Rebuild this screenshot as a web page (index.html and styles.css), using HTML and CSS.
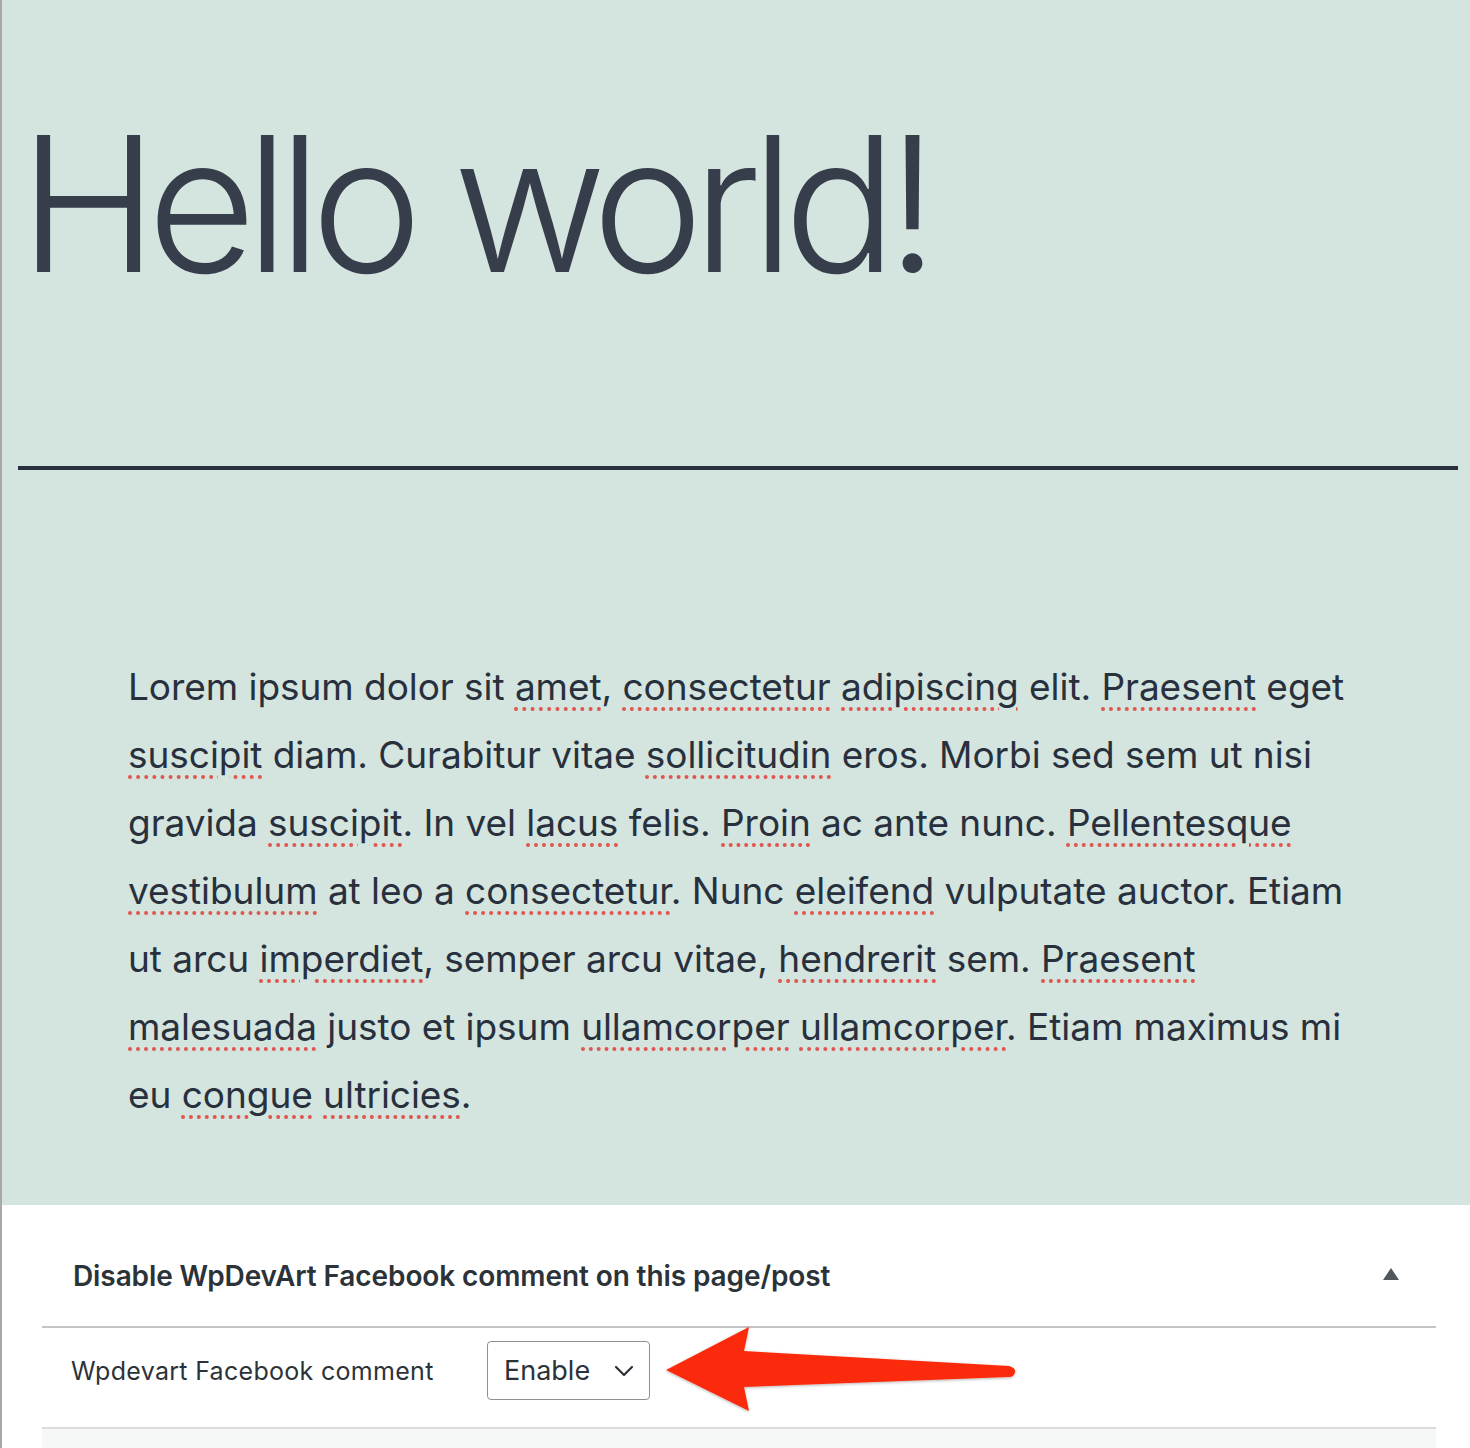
FILE: index.html
```html
<!DOCTYPE html>
<html lang="en">
<head>
<meta charset="utf-8">
<title>Hello world!</title>
<link rel="stylesheet" href="styles.css">
</head>
<body>
<div class="page">
  <header class="hero">
    <h1 class="title">Hello world!</h1>
    <hr class="divider">
    <div class="content">
      <p class="lorem">Lorem ipsum dolor sit <span class="sp">amet</span>, <span class="sp">consectetur</span> <span class="sp">adipiscing</span> elit. <span class="sp">Praesent</span> eget <span class="sp">suscipit</span> diam. Curabitur vitae <span class="sp">sollicitudin</span> eros. Morbi sed sem ut nisi gravida <span class="sp">suscipit</span>. In vel <span class="sp">lacus</span> felis. <span class="sp">Proin</span> ac ante nunc. <span class="sp">Pellentesque</span> <span class="sp">vestibulum</span> at leo a <span class="sp">consectetur</span>. Nunc <span class="sp">eleifend</span> vulputate auctor. Etiam ut arcu <span class="sp">imperdiet</span>, semper arcu vitae, <span class="sp">hendrerit</span> sem. <span class="sp">Praesent</span> <span class="sp">malesuada</span> justo et ipsum <span class="sp">ullamcorper</span> <span class="sp">ullamcorper</span>. Etiam maximus mi eu <span class="sp">congue</span> <span class="sp">ultricies</span>.</p>
    </div>
  </header>
  <section class="metabox">
    <div class="metabox-inner">
      <div class="metabox-head">
        <h2 class="metabox-title">Disable WpDevArt Facebook comment on this page/post</h2>
        <span class="toggle" aria-hidden="true"></span>
      </div>
      <div class="metabox-row">
        <label class="row-label">Wpdevart Facebook comment</label>
        <div class="select">
          <span class="select-value">Enable</span>
          <svg class="chevron" width="20" height="12" viewBox="0 0 20 12"><path d="M2 2 L10 10 L18 2" fill="none" stroke="#2c3338" stroke-width="2.2" stroke-linecap="round" stroke-linejoin="round"/></svg>
        </div>
        <svg class="arrow" width="380" height="100" viewBox="0 0 380 100">
          <defs>
            <filter id="sh" x="-10%" y="-20%" width="120%" height="140%">
              <feDropShadow dx="0" dy="1" stdDeviation="1.5" flood-color="#000" flood-opacity="0.3"/>
            </filter>
          </defs>
          <path filter="url(#sh)" d="M7 46 L90 3 L85 27 L350 42 Q357 44 356 48 Q355 53 350 53 L85 63 L90 87 Z" fill="#fb2c0a"/>
        </svg>
      </div>
    </div>
  </section>
  <div class="below"></div>
</div>
</body>
</html>
```
FILE: styles.css
```css
html, body {
  margin: 0;
  padding: 0;
  background: #ffffff;
}
.page {
  border-left: 2px solid #a9a9a9;
  min-height: 1448px;
  box-sizing: border-box;
  font-family: Inter, "Noto Sans", sans-serif;
  color: #333b49;
}
.hero {
  background: #d4e4de;
  padding: 90px 12px 0 16px;
  height: 1205px;
  box-sizing: border-box;
}
.title {
  margin: 0;
  font-family: Inter, sans-serif;
  font-weight: 300;
  font-size: 188px;
  line-height: 228px;
  letter-spacing: -11px;
  color: #363d4b;
  padding-left: 1px;
}
.divider {
  margin: 148px 0 0 0;
  border: 0;
  height: 4px;
  background: #28303d;
}
.content {
  padding: 183px 0 0 110px;
  width: 1224px;
}
.lorem {
  margin: 0;
  font-size: 37px;
  line-height: 68px;
  font-weight: 400;
  color: #28303d;
  letter-spacing: -0.05px;
}
.sp {
  text-decoration-line: underline;
  text-decoration-style: dotted;
  text-decoration-color: #e0554e;
  text-decoration-thickness: 4px;
  text-underline-offset: 7px;
}
.metabox {
  background: #fff;
  padding: 0 34px 0 40px;
}
.metabox-inner {
  border-bottom: 2px solid #dcdcde;
}
.metabox-head {
  display: flex;
  align-items: center;
  justify-content: space-between;
  height: 123px;
  box-sizing: border-box;
  padding: 20px 37px 0 31px;
  border-bottom: 2px solid #c3c4c7;
}
.metabox-title {
  margin: 0;
  font-size: 28px;
  font-weight: 600;
  color: #2c3338;
  letter-spacing: -0.1px;
}
.toggle {
  width: 0;
  height: 0;
  border-left: 8px solid transparent;
  border-right: 8px solid transparent;
  border-bottom: 12px solid #50575e;
  margin-top: -3px;
}
.metabox-row {
  position: relative;
  display: flex;
  align-items: center;
  height: 99px;
  box-sizing: border-box;
  padding: 0 0 14px 29px;
}
.row-label {
  font-size: 25px;
  color: #2c3338;
  width: 416px;
  letter-spacing: 0.3px;
}
.select {
  display: flex;
  align-items: center;
  justify-content: space-between;
  box-sizing: border-box;
  width: 163px;
  height: 59px;
  border: 1.5px solid #8c8f94;
  border-radius: 4px;
  padding: 0 15px 0 16px;
  font-size: 27px;
  color: #2c3338;
}
.arrow {
  position: absolute;
  left: 617px;
  top: -4px;
}
.below {
  background: #f6f7f7;
  height: 20px;
  margin: 0 34px 0 40px;
}
```
